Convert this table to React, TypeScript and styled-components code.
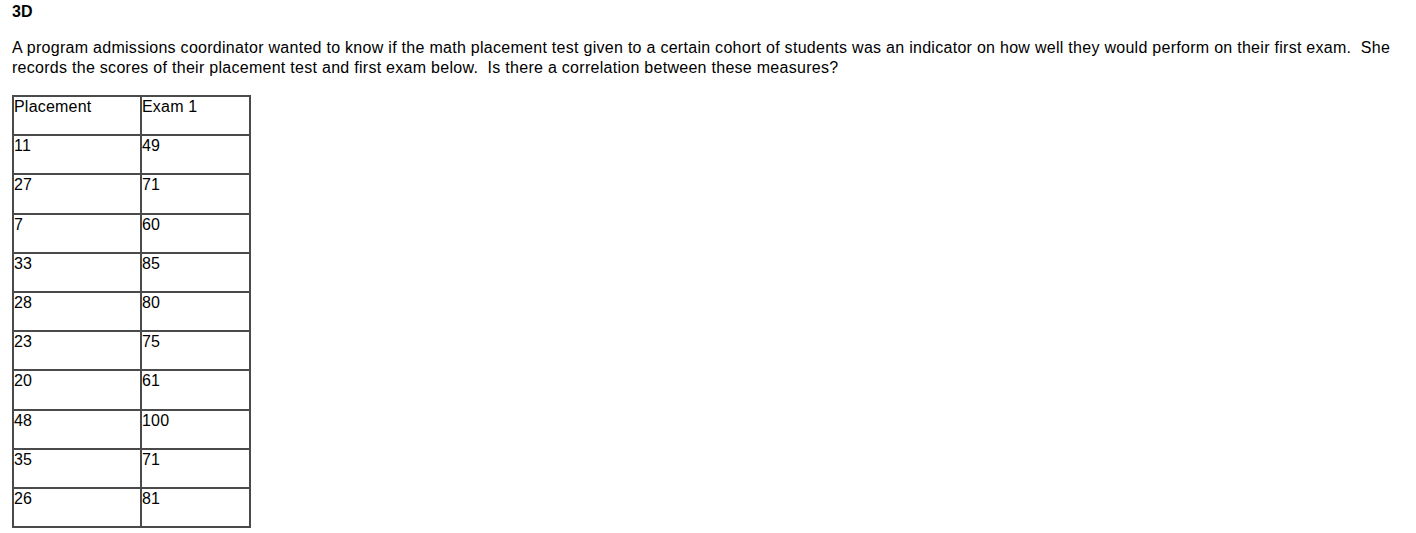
import styled, { createGlobalStyle } from "styled-components";

const GlobalStyle = createGlobalStyle`
  body {
    margin: 0;
    background: #fff;
    color: #000;
    font-family: "Liberation Sans", Arial, sans-serif;
  }
`;

const Page = styled.div`
  padding: 2px 12px 0 12px;
`;

const Title = styled.h3`
  margin: 0;
  font-size: 16px;
  font-weight: bold;
  line-height: 20px;
`;

const Question = styled.p`
  margin: 16px 0 0 0;
  font-size: 16px;
  line-height: 20px;
  letter-spacing: 0.28px;
`;

const Table = styled.table`
  margin-top: 17px;
  border: 1px solid #4a4a4a;
  border-spacing: 0;
  font-size: 16px;
  letter-spacing: 0.2px;
`;

const Cell = styled.td<{ $w: number }>`
  width: ${(p) => p.$w}px;
  height: 36.2px;
  box-sizing: content-box;
  border: 1px solid #4a4a4a;
  padding: 1px 0 0 0;
  vertical-align: top;
  line-height: 18px;
`;

const rows: [string, string][] = [
  ["Placement", "Exam 1"],
  ["11", "49"],
  ["27", "71"],
  ["7", "60"],
  ["33", "85"],
  ["28", "80"],
  ["23", "75"],
  ["20", "61"],
  ["48", "100"],
  ["35", "71"],
  ["26", "81"],
];

export default function App() {
  return (
    <Page>
      <GlobalStyle />
      <Title>3D</Title>
      <Question>
        A program admissions coordinator wanted to know if the math placement test given to a certain cohort of students
        was an indicator on how well they would perform on their first exam.&nbsp; She records the scores of their
        placement test and first exam below.&nbsp; Is there a correlation between these measures?
      </Question>
      <Table>
        <tbody>
          {rows.map(([a, b], i) => (
            <tr key={i}>
              <Cell $w={126}>{a}</Cell>
              <Cell $w={107}>{b}</Cell>
            </tr>
          ))}
        </tbody>
      </Table>
    </Page>
  );
}
